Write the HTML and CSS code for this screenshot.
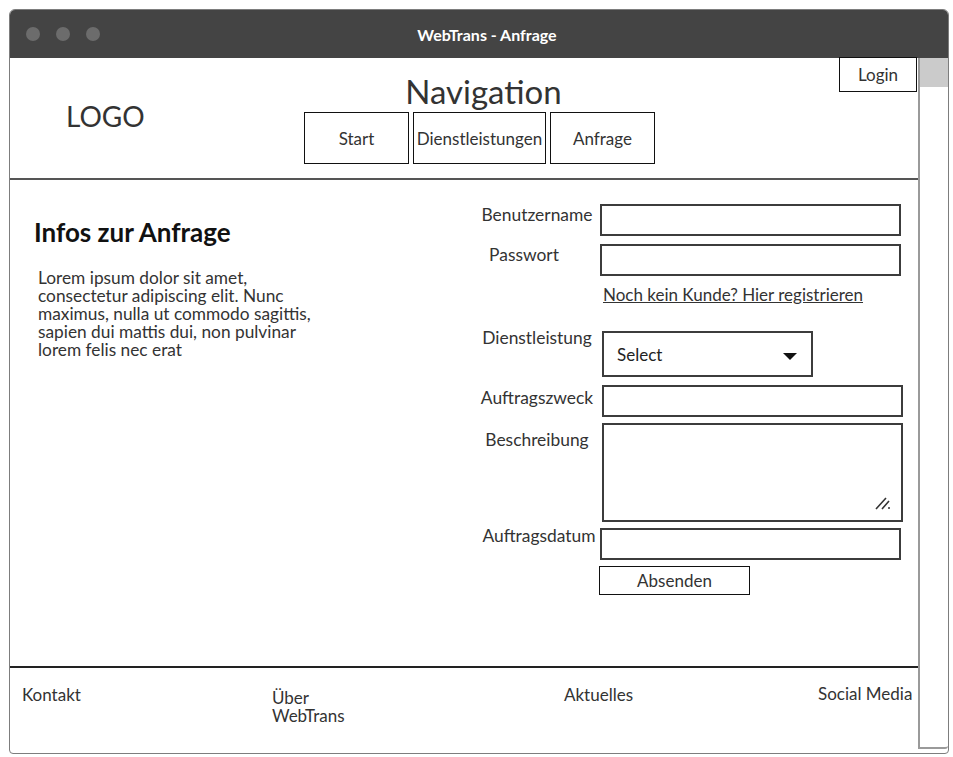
FILE: index.html
```html
<!DOCTYPE html>
<html lang="de">
<head>
  <meta charset="UTF-8" />
  <meta name="viewport" content="width=device-width, initial-scale=1.0"/>
  <title>WebTrans - Anfrage</title>
  <link rel="stylesheet" href="styles.css">
</head>
<body>
  <div class="window">
    <div class="titlebar">
      <div class="dots">
        <span class="dot"></span>
        <span class="dot"></span>
        <span class="dot"></span>
      </div>
      <div class="window-title">WebTrans - Anfrage</div>
      <div class="titlebar-spacer"></div>
    </div>

    <div class="window-body">
      <div class="page">
        <header class="site-header">
          <div class="logo">LOGO</div>
          <nav class="nav">
            <div class="nav-title">Navigation</div>
            <div class="nav-buttons">
              <a class="nav-btn nav-btn-short">Start</a>
              <a class="nav-btn">Dienstleistungen</a>
              <a class="nav-btn nav-btn-short">Anfrage</a>
            </div>
          </nav>
          <a class="login">Login</a>
        </header>

        <main class="content">
          <section class="intro">
            <h2>Infos zur Anfrage</h2>
            <p>Lorem ipsum dolor sit amet, consectetur adipiscing elit. Nunc maximus, nulla ut commodo sagittis, sapien dui mattis dui, non pulvinar lorem felis nec erat</p>
          </section>

          <form class="request-form">
            <div class="row">
              <label>Benutzername</label>
              <div class="field"></div>
            </div>
            <div class="row row-tight">
              <label class="label-passwort">Passwort</label>
              <div class="field"></div>
            </div>
            <a class="register">Noch kein Kunde? Hier registrieren</a>

            <div class="row row-select">
              <label class="label-high">Dienstleistung</label>
              <div class="select">
                <span>Select</span>
                <svg class="caret" width="14" height="7" viewBox="0 0 14 7"><path d="M0 0 H14 L7 7 Z" fill="#111"/></svg>
              </div>
            </div>
            <div class="row row-tight">
              <label class="label-mid">Auftragszweck</label>
              <div class="field field-shift"></div>
            </div>
            <div class="row row-close">
              <label class="label-low">Beschreibung</label>
              <div class="field field-shift textarea">
                <svg class="grip" width="16" height="15" viewBox="0 0 16 15">
                  <path d="M1 14 L11 3 M7 14 L14 6" stroke="#333" stroke-width="1.6" fill="none"/>
                  <circle cx="14" cy="13" r="1" fill="#333"/>
                </svg>
              </div>
            </div>
            <div class="row row-date">
              <label class="label-date">Auftragsdatum</label>
              <div class="field"></div>
            </div>
            <div class="submit-row">
              <button type="button" class="submit">Absenden</button>
            </div>
          </form>
        </main>

        <footer class="site-footer">
          <a class="footer-link">Kontakt</a>
          <a class="footer-link footer-about">Über WebTrans</a>
          <a class="footer-link">Aktuelles</a>
          <a class="footer-link footer-social">Social Media</a>
        </footer>
      </div>

      <div class="scrollbar">
        <div class="thumb"></div>
      </div>
    </div>
  </div>
</body>
</html>
```

FILE: styles.css
```css
* {
  margin: 0;
  padding: 0;
  box-sizing: border-box;
}

body {
  font-family: 'Lato', 'Liberation Sans', sans-serif;
  background: #ffffff;
  color: #333333;
}

/* Browser window frame */
.window {
  margin: 9px 0 0 9px;
  width: 940px;
  height: 745px;
  border: 1px solid #7d7d7d;
  border-radius: 6px 6px 4px 4px;
  overflow: hidden;
  display: flex;
  flex-direction: column;
  background: #ffffff;
}

.titlebar {
  height: 48px;
  background: #444444;
  display: flex;
  align-items: center;
  flex-shrink: 0;
}

.dots {
  display: flex;
  gap: 16px;
  padding-left: 16px;
}

.dot {
  width: 14px;
  height: 14px;
  border-radius: 50%;
  background: #6c6c6c;
}

.window-title {
  flex: 1;
  text-align: center;
  color: #ffffff;
  font-weight: 700;
  font-size: 16px;
}

.titlebar-spacer {
  width: 74px;
}

.window-body {
  flex: 1;
  display: flex;
  min-height: 0;
}

.page {
  flex: 1;
  display: flex;
  flex-direction: column;
}

/* Scrollbar */
.scrollbar {
  width: 30px;
  border-left: 2px solid #9a9a9a;
  border-bottom: 2px solid #9a9a9a;
  margin-bottom: 4px;
  border-radius: 0 0 3px 0;
}

.thumb {
  height: 29px;
  background: #cbcbcb;
}

/* Header */
.site-header {
  height: 122px;
  display: flex;
  border-bottom: 2px solid #555555;
}

.logo {
  width: 294px;
  padding-left: 56px;
  align-self: center;
  font-size: 28px;
  color: #333333;
  margin-bottom: 4px;
}

.nav {
  padding-top: 14px;
  display: flex;
  flex-direction: column;
  align-items: center;
}

.nav-title {
  font-size: 33px;
  line-height: 38px;
  color: #333333;
  margin-bottom: 2px;
  padding-left: 8px;
}

.nav-buttons {
  display: flex;
  gap: 4px;
}

.nav-btn {
  height: 52px;
  width: 133px;
  border: 1px solid #111111;
  display: flex;
  align-items: center;
  justify-content: center;
  font-size: 17px;
  color: #333333;
}

.nav-btn-short {
  width: 105px;
}

.login {
  margin-left: auto;
  margin-right: 1px;
  margin-top: -1px;
  align-self: flex-start;
  width: 78px;
  height: 35px;
  border: 1px solid #111111;
  display: flex;
  align-items: center;
  justify-content: center;
  font-size: 17px;
  color: #333333;
}

/* Main content */
.content {
  flex: 1;
  display: flex;
  border-bottom: 2px solid #222222;
}

.intro {
  width: 468px;
  padding: 37px 0 0 24px;
}

.intro h2 {
  font-size: 26px;
  line-height: 30px;
  font-weight: 700;
  color: #111111;
}

.intro p {
  margin-top: 22px;
  padding-left: 4px;
  max-width: 292px;
  font-size: 17.3px;
  line-height: 18px;
  color: #333333;
}

.request-form {
  padding-top: 24px;
  display: flex;
  flex-direction: column;
}

.row {
  display: flex;
  align-items: flex-start;
}

.row-tight {
  margin-top: 8px;
}

.row-close {
  margin-top: 6px;
}

.row-date {
  margin-top: 6px;
}

.row label {
  width: 118px;
  text-align: center;
  font-size: 17.4px;
  line-height: 20px;
  padding-top: 1px;
  margin-right: 4px;
  color: #333333;
  white-space: nowrap;
}

.label-passwort {
  padding-right: 26px;
}

.label-high {
  margin-top: -4px;
}

.label-mid {
  padding-top: 3px !important;
}

.label-low {
  padding-top: 7px !important;
}

.label-date {
  padding-left: 4px;
  margin-top: -3px;
}

.field {
  width: 301px;
  height: 32px;
  border: 2px solid #3c3c3c;
}

.field-shift {
  margin-left: 2px;
}

.textarea {
  height: 99px;
  position: relative;
}

.grip {
  position: absolute;
  right: 10px;
  bottom: 10px;
}

.register {
  margin: 9px 0 0 125px;
  font-size: 17px;
  line-height: 20px;
  color: #333333;
  text-decoration: underline;
}

.row-select {
  margin-top: 26px;
}

.select {
  margin-left: 2px;
  width: 211px;
  height: 46px;
  border: 2px solid #3c3c3c;
  display: flex;
  align-items: center;
  justify-content: space-between;
  padding: 0 14px 0 13px;
  font-size: 17px;
  color: #222222;
}

.caret {
  margin-top: 4px;
}

.submit-row {
  padding-left: 121px;
  margin-top: 6px;
}

.submit {
  width: 151px;
  height: 29px;
  border: 1px solid #111111;
  background: #ffffff;
  font-family: inherit;
  font-size: 17px;
  color: #333333;
}

/* Footer */
.site-footer {
  height: 85px;
  display: grid;
  grid-template-columns: 250px 292px 254px auto;
  padding: 18px 0 0 12px;
}

.footer-link {
  font-size: 17px;
  line-height: 18px;
  color: #333333;
}

.footer-about {
  max-width: 80px;
  padding-top: 3px;
}

.footer-social {
  margin-top: -1px;
}
```
